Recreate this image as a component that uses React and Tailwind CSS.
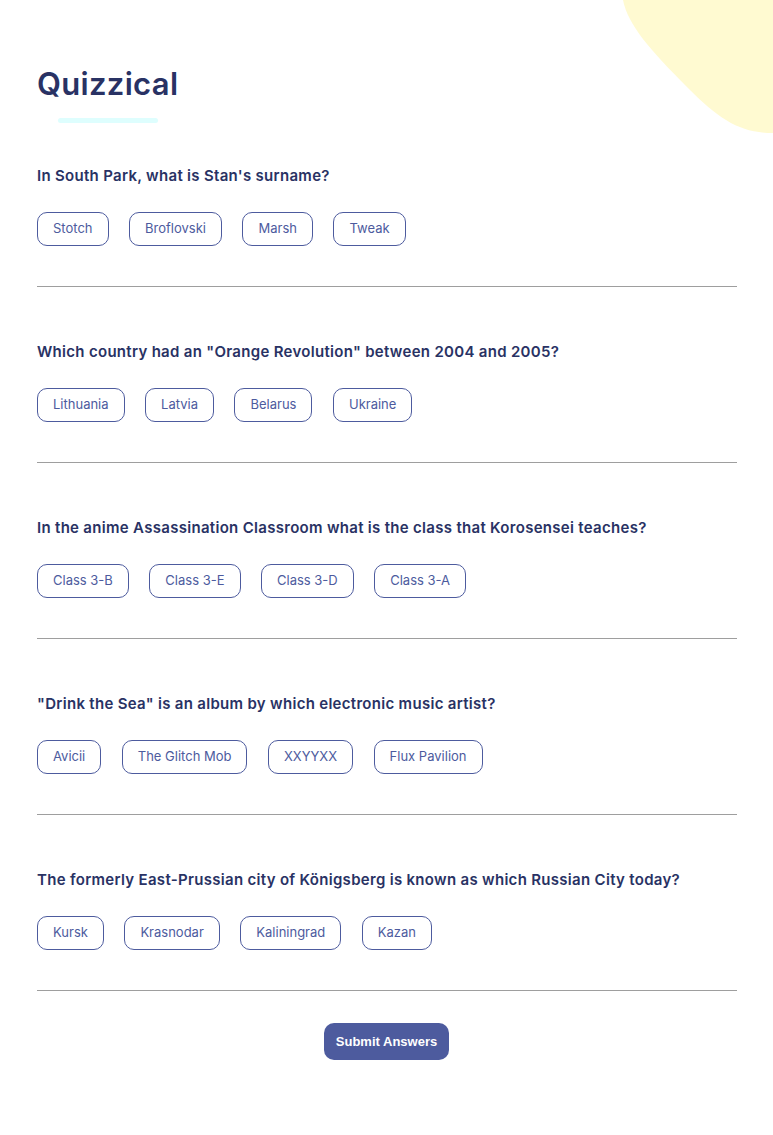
import React from "react";

const questions = [
  { q: "In South Park, what is Stan's surname?", a: ["Stotch", "Broflovski", "Marsh", "Tweak"] },
  { q: 'Which country had an "Orange Revolution" between 2004 and 2005?', a: ["Lithuania", "Latvia", "Belarus", "Ukraine"] },
  { q: "In the anime Assassination Classroom what is the class that Korosensei teaches?", a: ["Class 3-B", "Class 3-E", "Class 3-D", "Class 3-A"] },
  { q: '"Drink the Sea" is an album by which electronic music artist?', a: ["Avicii", "The Glitch Mob", "XXYYXX", "Flux Pavilion"] },
  { q: "The formerly East-Prussian city of Königsberg is known as which Russian City today?", a: ["Kursk", "Krasnodar", "Kaliningrad", "Kazan"] },
];

export default function App() {
  return (
    <div className="relative w-[773px] min-h-[1135px] bg-white overflow-hidden font-['Inter',sans-serif]">
      <svg className="absolute top-0 right-0" width="150" height="134" viewBox="623 0 150 134">
        <path d="M623,0 C628,25 650,50 688,88 C720,120 740,133 773,133 L773,0 Z" fill="#FFFAD1" />
      </svg>
      <div className="relative px-[37px] pt-[65px]">
        <h1 className="text-[31px] leading-[38px] font-semibold text-[#293264] tracking-[0.01em] font-['Inter',sans-serif]">
          Quizzical
        </h1>
        <div className="ml-[21px] mt-[15px] w-[100px] h-[5px] rounded-full bg-[#DEFEFE]" />
        <div className="mt-[43px]">
          {questions.map((item, i) => (
            <div key={i} className={i === 0 ? "" : "pt-[55px]"}>
              <p className="text-[15px] leading-[20px] font-semibold text-[#293264] tracking-[0.02em]">{item.q}</p>
              <div className="mt-[26px] flex gap-[20.5px]">
                {item.a.map((ans) => (
                  <button
                    key={ans}
                    className="h-[34px] px-[15px] rounded-[10px] border border-[#4D5B9E] text-[13px] text-[#4D5B9E] bg-white"
                  >
                    {ans}
                  </button>
                ))}
              </div>
              <div className="mt-[40px] w-[700px] h-px bg-[#9E9E9E]" />
            </div>
          ))}
        </div>
        <div className="flex justify-center mt-[32px]">
          <button className="h-[37px] w-[125px] rounded-[10px] bg-[#4D5B9E] text-white text-[13px] font-bold font-['Liberation_Sans',sans-serif]">
            Submit Answers
          </button>
        </div>
      </div>
    </div>
  );
}
